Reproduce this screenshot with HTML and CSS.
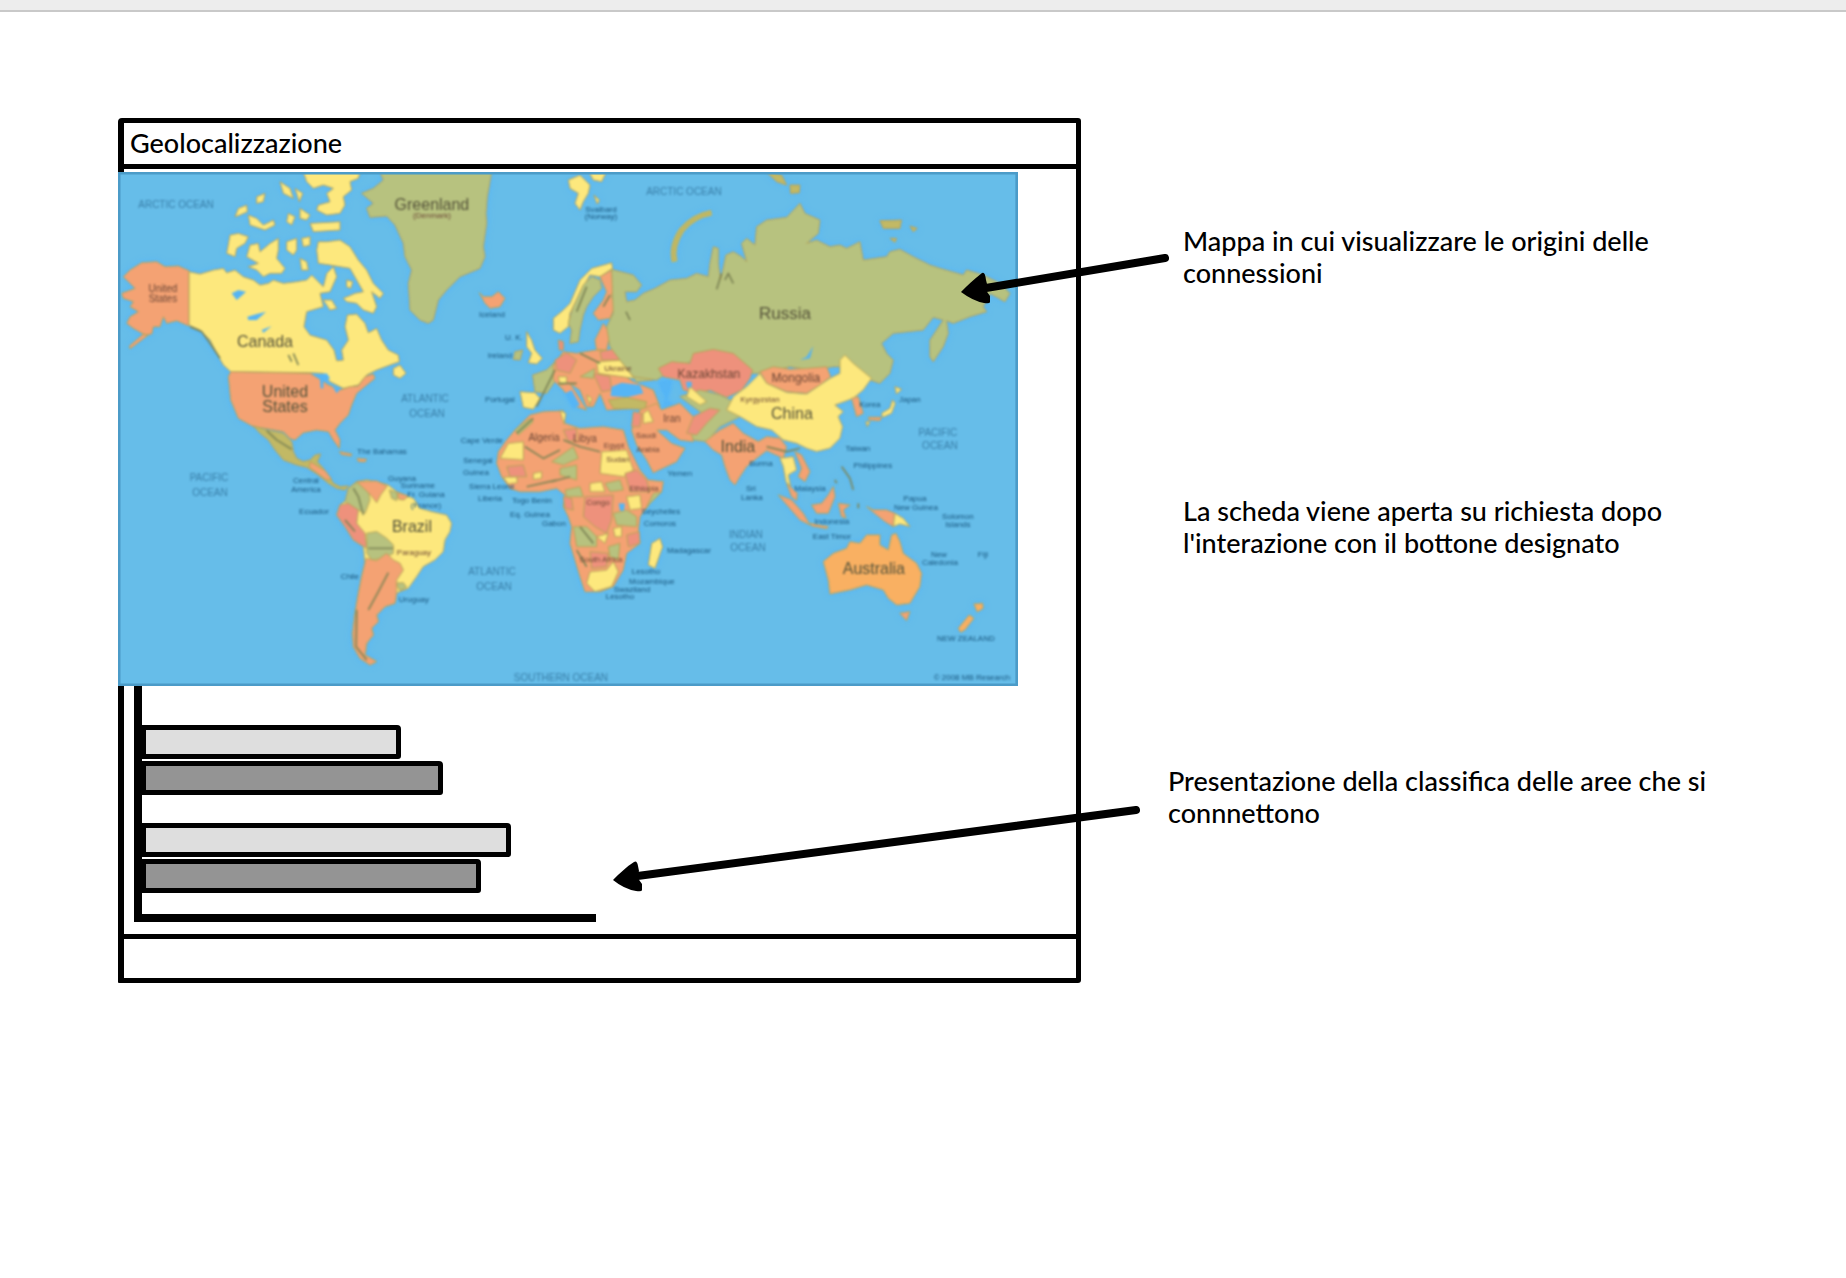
FILE: index.html
```html
<!DOCTYPE html>
<html lang="it">
<head>
<meta charset="utf-8">
<meta name="viewport" content="width=device-width, initial-scale=1">
<title>Geolocalizzazione</title>
<link rel="stylesheet" href="styles.css">
</head>
<body>
<div class="toolbar"></div>
<main class="board">
  <section class="window">
    <h1 class="window-title">Geolocalizzazione</h1>
    <svg class="map" viewBox="118 172 900 514" role="img" aria-label="Mappa del mondo">
      <rect class="sea" x="118" y="172" width="900" height="514"/>
      <g class="land">
        <!-- North America and Greenland -->
        <g transform="translate(110 110) scale(.33333)">
          <path class="orange" d="M40 500L60 480 95 458 140 455 165 470 205 468 237 482V648L200 632 170 640 160 620 150 650 130 650 125 672 105 675 70 655 50 640 60 620 85 605 60 590 70 575 40 565 35 550 75 535 60 520ZM115 675L60 716 58 708 100 672Z"/>
          <path class="yellow" d="M237 485L270 492 310 480 340 475 350 488 375 480 400 500 430 510 450 525 475 520 490 510 520 520 560 515 590 510 605 495 625 515 640 530 650 490 670 470 680 500 660 545 630 550 640 590 590 605 582 650 600 675 650 690 672 720 680 752 700 750 695 720 715 690 705 650 712 615 740 612 765 640 775 668 800 655 815 690 835 720 865 735 868 755 840 765 800 780 770 795 745 825 700 835 660 815 640 790 600 788 362 785 340 765 320 730 300 690 270 660 237 645Z"/>
          <path class="yellow" d="M650 395L690 390 720 410 745 450 770 480 790 520 820 550 810 565 785 545 800 590 790 610 760 600 740 580 710 575 700 565 735 550 760 545 740 510 720 475 690 470 660 465 625 460 620 420 625 395ZM580 186L750 186 745 205 720 215 725 240 700 260 705 285 690 310 650 315 620 300 625 285 660 275 650 250 670 235 640 225 610 235 590 215ZM510 215L540 235 550 265 520 250ZM555 235L578 250 568 275ZM440 260L465 250 460 275 440 280ZM375 320L385 295 410 285 412 305 390 315ZM415 315L440 325 460 345 490 330 495 345 465 360 420 345ZM535 310L555 320 545 345 530 335ZM600 340L690 335 690 360 610 365ZM570 295L600 315 590 330 570 325Z"/>
          <path class="yellow" d="M360 375L385 370 415 380 405 400 380 415 375 440 350 430ZM420 405L445 400 450 425 480 400 505 385 505 420 500 445 525 475 515 490 480 490 460 500 440 480 415 470 445 460 410 440ZM530 395L560 385 560 420 550 435 530 420ZM575 385L600 380 600 405 580 410ZM570 445L590 455 595 480 575 480ZM640 570L665 570 680 595 660 600ZM850 775L870 765 888 790 870 805 850 795ZM710 510L728 515 722 535 710 530Z"/>
          <path class="orange" d="M362 785L600 790 625 805 655 825 690 840 720 830 745 828 765 800 790 792 795 805 770 825 740 850 725 885 715 915 690 940 675 960 690 990 688 1015 670 990 655 965 620 960 580 968 555 990 540 985 520 965 465 955 430 950 385 925 362 870 355 800Z"/>
          <path class="green" d="M810 186L1145 186 1140 215 1132 260 1128 310 1130 340 1120 410 1125 440 1110 475 1050 500 1010 540 985 570 970 630 955 640 930 630 900 600 895 520 905 480 885 440 880 400 855 345 830 318 780 322 770 295 790 280 755 250 790 235 820 210Z"/>
          <path class="lake" d="M365 550L385 540 408 545 380 570ZM412 620L440 612 468 605 440 630 415 630ZM455 660L485 648 460 668ZM610 795L650 790 660 805 640 812 640 835 632 835 630 808ZM668 830L690 838 680 850Z"/>
          <path class="dark-line" d="M240 650L275 665 300 700 330 745M535 735L545 755M550 730L565 765"/>
        </g>
        <!-- Central and South America -->
        <g transform="translate(110 380) scale(.33333)">
          <path class="olive" d="M430 138L470 150 520 160 545 185 550 215 560 235 580 245 600 240 615 225 632 222 622 245 640 265 655 285 670 310 690 320 715 318 705 330 680 325 655 310 625 285 590 262 560 255 520 240 495 210 475 180 450 160Z"/>
          <path class="orange" d="M600 245L622 258 645 272 665 298 650 300 625 282 598 262ZM688 215L725 222 724 228 695 224ZM742 235L770 238 765 246 744 244Z"/>
          <path class="yellow" d="M715 325L740 305 770 300 800 305 835 315 860 335 910 355 930 385 965 395 1010 405 1025 430 1020 455 1005 480 1000 515 975 540 940 560 920 590 895 625 870 635 860 640 855 670 825 680 800 705 805 725 785 745 790 765 770 790 765 825 800 845 780 855 750 835 730 800 728 760 735 700 745 640 755 590 765 550 760 500 730 480 705 440 680 405 690 375 710 360Z"/>
          <path class="green" d="M715 325L740 308 775 330 780 360 765 400 735 385 705 365ZM770 460L800 455 830 475 850 495 850 520 820 535 785 540 770 520ZM838 330L862 338 860 362 845 355ZM858 610L880 608 890 622 870 633Z"/>
          <path class="orange" d="M740 305L800 303 832 318 812 345 800 368 782 345ZM862 338L895 348 882 360 866 358ZM768 535L800 542 830 520 850 540 870 550 880 570 860 600 860 640 855 670 825 680 800 705 805 725 785 745 790 765 770 790 765 825 800 845 780 855 750 835 730 800 728 760 735 700 745 640 755 590Z"/>
          <path class="pink" d="M690 375L715 370 745 390 740 430 765 460 770 505 730 480 705 440 680 405Z"/>
          <path class="dark-line" d="M470 152L500 180 545 208M730 325L745 350 760 405M705 420L735 455M835 578L805 635 775 690M740 690L738 800 770 840M775 505H850"/>
        </g>
        <!-- Northern and central Europe -->
        <g transform="translate(420 160) scale(.33333)">
          <path class="orange" d="M178 398L190 410 215 410 235 395 255 415 240 440 210 445 195 430Z"/>
          <path class="yellow" d="M445 60L480 45 510 75 505 100 490 125 480 150 465 130 475 100 450 85ZM508 38L558 38 545 65 520 60ZM522 105L538 120 532 132ZM400 475L430 450 450 430 465 395 480 360 515 325 575 308 578 325 540 350 510 345 490 380 465 430 450 460 445 500 420 520 400 510ZM320 515L335 540 345 570 367 595 350 612 325 608 335 580 320 560ZM300 695L345 698 360 715 340 748 310 742Z"/>
          <path class="green" d="M490 375L515 350 540 360 545 385 520 410 500 440 490 465 480 510 475 545 450 550 455 510 445 490 460 440ZM285 575L308 570 300 600 280 598ZM338 645L380 630 405 605 415 650 380 700 345 695Z"/>
          <path class="orange" d="M540 350L575 330 580 380 575 410 585 440 570 475 535 480 520 460 550 420 560 395ZM400 615L430 575 470 580 540 568 600 590 600 640 640 665 700 690 720 740 560 750 540 700 520 740 500 740 480 690 450 670 500 750 470 740 430 690 400 660ZM525 540L550 490 570 520 560 570 530 570Z"/>
          <path class="pink" d="M415 540L430 545 430 570 418 570ZM405 600L440 578 470 600 450 640 410 630ZM540 575L590 565 600 600 545 600ZM520 640L570 650 575 690 545 695Z"/>
          <path class="yellow" d="M530 605L610 600 655 635 640 655 535 640ZM415 650L440 650 440 670 420 675ZM500 705L515 715 510 735Z"/>
          <path class="green" d="M590 515L650 555 690 610 700 660 650 665 600 600 575 560ZM480 650L525 625 520 655Z"/>
          <path class="lake" d="M575 680L605 668 660 675 670 700 620 712 572 708ZM435 700L455 690 480 735 460 745Z"/>
          <path class="olive" d="M565 720L620 712 680 725 675 748 580 745Z"/>
          <path class="dark-line" d="M350 740L380 680 405 630M470 455L500 380M550 440L570 405M480 580L540 610M415 670L470 670"/>
        </g>
        <!-- Russia and central Asia -->
        <g transform="translate(600 160) scale(.33333)">
          <path class="green" d="M35 328L100 345 125 375 110 395 75 395 80 425 105 420 130 400 165 385 210 360 260 355 290 340 325 350 330 310 340 260 355 265 355 310 362 360 378 285 400 275 425 290 440 305 425 250 440 235 465 255 470 200 500 180 560 172 600 130 615 160 660 180 655 220 620 250 650 240 690 260 720 255 740 265 780 245 790 300 860 290 870 275 900 268 940 290 990 315 1020 325 1090 345 1100 330 1150 345 1200 370 1230 400 1215 425 1170 400 1150 440 1160 455 1110 470 1060 490 1040 482 1045 520 1030 560 1000 605 990 590 990 540 1010 510 1030 480 1000 472 970 510 880 520 845 550 860 580 880 600 870 640 840 670 810 660 740 620 700 620 640 630 570 620 480 640 450 640 400 600 340 590 280 600 200 640 170 660 100 650 60 600 30 560 20 500 40 460Z"/>
          <path class="novaya" d="M224 305Q212 260 245 210 280 168 335 158"/>
          <path class="olive" d="M500 36L545 45 560 75 530 65ZM570 75L600 75 598 98 572 100ZM840 182L905 180 900 205 850 205ZM930 198L952 205 940 215ZM870 235L890 235 885 247Z"/>
          <path class="pink" d="M175 625L215 605 270 610 280 580 340 568 400 580 458 630 450 655 425 690 380 712 330 690 290 700 250 690 240 660 190 650Z"/>
          <path class="orange" d="M480 635L520 620 570 628 620 625 680 620 692 650 660 675 620 700 560 695 500 670Z"/>
          <path class="lake" d="M175 665L215 660 210 690 200 720 222 735 215 750 190 745 195 710ZM258 665L275 665 275 685 262 685ZM600 600L620 590 640 558 630 595Z"/>
          <path class="dark-line" d="M350 388L365 340M375 360L385 340 400 370M78 455L90 480"/>
        </g>
        <!-- Africa and the Middle East -->
        <g transform="translate(480 380) scale(.33333)">
          <path class="orange" d="M105 150L150 105 190 95 250 92 255 130 300 145 370 140 430 150 445 200 465 240 480 270 505 300 550 305 545 335 510 370 480 410 475 450 480 490 440 520 430 570 400 620 360 635 315 635 300 590 285 540 270 490 275 440 265 410 250 380 255 345 230 325 180 335 120 335 90 325 65 290 50 250 55 215 80 180ZM455 150L480 90 530 70 545 90 600 70 640 110 640 185 600 180 560 150 530 150 575 190 615 205 590 245 520 278 500 240 470 195Z"/>
          <path class="yellow" d="M60 235L85 190 130 185 130 240ZM240 92L258 100 252 132ZM365 215L440 210 460 270 430 290 360 280ZM70 292L110 290 112 308 85 312ZM160 280L185 275 185 295 160 298ZM330 310L365 305 375 335 330 335ZM440 350L480 345 485 385 450 390ZM400 445L425 440 425 470 405 470ZM330 575L380 570 400 545 415 575 395 620 345 635 320 610ZM350 470L385 460 375 490ZM540 475L548 500 525 565 505 555 515 490ZM490 100L505 90 520 125 490 130Z"/>
          <path class="green" d="M105 150L150 115 160 125 115 165ZM215 245L280 200 295 235 250 255ZM240 265L290 255 290 300 240 285ZM375 310L420 300 430 330 390 335ZM400 400L440 390 470 410 470 440 410 435ZM280 440L320 440 350 470 350 500 290 500ZM520 340L545 335 510 370 495 390ZM385 500L420 490 415 540 390 530ZM255 330L300 320 310 350 260 350Z"/>
          <path class="pink" d="M435 280L470 270 500 300 510 335 450 335ZM315 350L400 345 395 420 380 460 345 440 310 410ZM440 465L478 455 480 490 445 500ZM250 150L290 145 290 180 265 185ZM330 515L385 520 380 560 335 565ZM80 260L130 255 140 290 90 290ZM250 350L275 355 280 390 255 385ZM460 95L485 100 480 140 455 140Z"/>
          <path class="lake" d="M416 370L435 370 432 392 420 392Z"/>
          <path class="dark-line" d="M135 200L190 235 240 210M250 180L300 200 360 215M215 305L270 290M110 160L160 115M300 440L340 490M290 510L320 560M140 320L230 300"/>
        </g>
        <!-- South-east Asia and Oceania -->
        <g transform="translate(700 380) scale(.33333)">
          <path class="green" d="M-60 50L0 30 60 45 120 75 120 110 60 140 20 185 -20 180 -30 150 20 110 -20 80Z"/>
          <path class="pink" d="M-40 160L-20 110 30 85 60 90 20 130 -10 165Z"/>
          <path class="yellow" d="M-30 20L20 65 0 75 -40 50ZM435 -75L460 -50 515 -5 490 30 460 55 420 70 405 75 430 95 415 110 428 140 420 175 390 205 350 215 320 205 290 190 250 180 215 150 170 140 120 110 80 90 100 50 140 20 180 -20 200 10 260 37 320 42 390 -5 420 -20 420 -60Z"/>
          <path class="orange" d="M15 185L60 150 100 130 130 160 175 185 200 170 240 175 260 200 250 235 200 212 170 235 140 260 120 290 105 315 90 300 75 260 65 225 40 210ZM285 215L305 225 330 275 315 305 295 290 305 265ZM455 55L475 50 490 100 470 110ZM505 112L545 112 540 122 508 120ZM260 310L292 340 290 362 275 350ZM235 345L275 360 310 400 330 435 300 420 265 380ZM330 430L385 440 380 446 335 438ZM335 375L365 370 385 345 400 320 405 350 385 400 350 400ZM415 370L450 375 430 390 438 415 425 410ZM500 380L520 390 560 390 585 400 580 440 555 425 530 405ZM600 700L630 695 620 722Z"/>
          <path class="yellow" d="M240 235L280 230 290 270 265 285 272 320 258 305 250 260ZM585 20L605 28 590 42ZM578 60L586 70 575 100 548 112 545 100 570 85ZM585 400L610 415 630 440 600 432 580 440ZM498 125L510 125 502 140Z"/>
          <path class="sand" d="M370 545L400 520 440 505 450 485 480 490 500 465 540 465 540 495 565 510 575 465 588 460 600 485 610 520 650 550 665 580 660 620 630 670 590 675 565 655 550 630 500 615 450 630 390 642 385 600ZM822 672L848 670 850 685 832 696ZM808 705L822 715 795 750 782 757 775 745Z"/>
          <path class="dark-line" d="M425 260L450 295 460 330M405 300L410 310M475 370V385M200 200L260 215 300 205"/>
        </g>
      </g>
      <g class="labels">
        <text class="country" x="432" y="210">Greenland</text>
        <text class="tiny" x="432" y="218">(Denmark)</text>
        <text class="country" x="265" y="347">Canada</text>
        <text class="country" x="285" y="397">United</text>
        <text class="country" x="285" y="412">States</text>
        <text class="small" x="163" y="292">United</text>
        <text class="small" x="163" y="302">States</text>
        <text class="country large" x="785" y="319">Russia</text>
        <text class="country" x="792" y="419">China</text>
        <text class="country" x="738" y="452">India</text>
        <text class="country" x="874" y="574">Australia</text>
        <text class="country" x="412" y="532">Brazil</text>
        <text class="medium" x="709" y="378">Kazakhstan</text>
        <text class="medium" x="796" y="382">Mongolia</text>
        <text class="small" x="672" y="422">Iran</text>
        <text class="small" x="544" y="441">Algeria</text>
        <text class="small" x="585" y="442">Libya</text>
        <text class="tiny" x="618" y="371">Ukraine</text>
        <text class="tiny" x="646" y="438">Saudi</text>
        <text class="tiny" x="648" y="452">Arabia</text>
        <text class="tiny" x="614" y="448">Egypt</text>
        <text class="tiny" x="618" y="462">Sudan</text>
        <text class="tiny" x="644" y="491">Ethiopia</text>
        <text class="tiny" x="598" y="505">Congo</text>
        <text class="tiny" x="601" y="562">South Africa</text>
        <text class="tiny" x="760" y="402">Kyrgyzstan</text>
        <text class="tiny" x="414" y="555">Paraguay</text>
        <g class="sea-name">
          <text x="176" y="208">ARCTIC OCEAN</text><text x="684" y="195">ARCTIC OCEAN</text>
          <text x="425" y="402">ATLANTIC</text><text x="427" y="417">OCEAN</text>
          <text x="209" y="481">PACIFIC</text><text x="210" y="496">OCEAN</text>
          <text x="492" y="575">ATLANTIC</text><text x="494" y="590">OCEAN</text>
          <text x="746" y="538">INDIAN</text><text x="748" y="551">OCEAN</text>
          <text x="938" y="436">PACIFIC</text><text x="940" y="449">OCEAN</text>
          <text x="561" y="681">SOUTHERN OCEAN</text>
        </g>
        <g class="place">
          <text x="601" y="212">Svalbard</text><text x="601" y="219">(Norway)</text>
          <text x="492" y="317">Iceland</text><text x="514" y="340">U. K.</text><text x="500" y="358">Ireland</text><text x="500" y="402">Portugal</text>
          <text x="382" y="454">The Bahamas</text><text x="306" y="483">Central</text><text x="306" y="492">America</text><text x="314" y="514">Ecuador</text>
          <text x="402" y="481">Guyana</text><text x="418" y="488">Suriname</text><text x="426" y="497">Fr. Guiana</text><text x="426" y="508">(France)</text>
          <text x="350" y="579">Chile</text><text x="414" y="602">Uruguay</text>
          <text x="482" y="443">Cape Verde</text><text x="478" y="463">Senegal</text><text x="476" y="475">Guinea</text><text x="492" y="489">Sierra Leone</text><text x="490" y="501">Liberia</text>
          <text x="532" y="503">Togo Benin</text><text x="530" y="517">Eq. Guinea</text><text x="554" y="526">Gabon</text>
          <text x="661" y="514">Seychelles</text><text x="660" y="526">Comoros</text><text x="689" y="553">Madagascar</text>
          <text x="646" y="574">Lesotho</text><text x="652" y="584">Mozambique</text><text x="632" y="592">Swaziland</text><text x="620" y="599">Lesotho</text>
          <text x="680" y="476">Yemen</text><text x="761" y="466">Burma</text><text x="751" y="491">Sri</text><text x="752" y="500">Lanka</text>
          <text x="910" y="402">Japan</text><text x="870" y="407">Korea</text><text x="858" y="451">Taiwan</text><text x="873" y="468">Philippines</text><text x="810" y="491">Malaysia</text>
          <text x="832" y="524">Indonesia</text><text x="832" y="539">East Timor</text><text x="915" y="501">Papua</text><text x="916" y="510">New Guinea</text>
          <text x="958" y="519">Solomon</text><text x="958" y="527">Islands</text><text x="939" y="557">New</text><text x="940" y="565">Caledonia</text><text x="983" y="557">Fiji</text>
          <text x="966" y="641">NEW ZEALAND</text><text x="972" y="680">© 2008 MB Research</text>
        </g>
      </g>
      <path class="map-edge" d="M118 172H1018V686H118Z"/>
    </svg>
    <div class="chart" role="img" aria-label="Classifica delle aree">
      <div class="bar light" style="width:57%"></div>
      <div class="bar dark" style="width:66.3%"></div>
      <div class="bar light second" style="width:81.3%"></div>
      <div class="bar dark" style="width:74.7%"></div>
    </div>
    <footer class="window-footer"></footer>
  </section>
  <aside class="notes">
    <p class="note">Mappa in cui visualizzare le origini delle connessioni</p>
    <p class="note">La scheda viene aperta su richiesta dopo l'interazione con il bottone designato</p>
    <p class="note wide">Presentazione della classifica delle aree che si connnettono</p>
  </aside>
  <svg class="arrows" viewBox="0 12 1846 1000" aria-hidden="true">
    <path class="shaft" d="M1165 258L980 289M1136 810L630 877"/>
    <path d="M961 292C967 286 974 279 982 273Q985 271 986 280L987 284 985 289 990 296V302Q990 304 984 303 973 301 961 292Z"/>
    <path d="M613 880C619 874 626 867 634 862Q637 860 638 866L639 871 637 877 642 884V890Q642 892 636 891 624 889 613 880Z"/>
  </svg>
</main>
</body>
</html>
```
FILE: styles.css
```css
* { box-sizing: border-box; }

body {
  margin: 0;
  background: #fff;
  color: #000;
  font-family: Lato, "Open Sans", sans-serif;
  font-size: 27px;
  line-height: 32px;
}

.toolbar {
  height: 12px;
  background: #ededed;
  border-bottom: 2px solid #c9c9c9;
}

.board {
  position: relative;
  display: grid;
  grid-template-columns: 963fr 562fr;
  column-gap: 87px;
  align-items: start;
  padding: 106px 116px 106px 118px;
}

.window {
  border: 5px solid #000;
  border-left-width: 6px;
  border-radius: 4px 3px 3px 1px;
}

.window-title {
  margin: 0;
  padding: 4px 6px 5px;
  border-bottom: 5px solid #000;
  font-size: 27px;
  font-weight: 500;
  line-height: 32px;
}

.map {
  display: block;
  width: calc(94% + 5px);
  margin: 3px 0 0 -6px;
}

.sea { fill: #66bde9; }
.land { filter: blur(1px) drop-shadow(0 0 3px #52b6ff); stroke: #b8a458; stroke-width: 3px; stroke-linejoin: round; }
.yellow { fill: #fde87d; }
.orange { fill: #f4a273; }
.pink { fill: #ee917c; }
.green { fill: #b7c27f; }
.olive { fill: #c2b965; }
.sand { fill: #f9b062; }
.lake { fill: #55b5f5; stroke: none; }
.novaya { fill: none; stroke: #bfb763; stroke-width: 18px; }
.dark-line { fill: none; stroke: #7d8455; stroke-width: 5px; }
.map-edge { fill: none; stroke: #4b9bc8; stroke-width: 5px; }

.labels {
  fill: #55533a;
  font-family: "Liberation Sans", Arial, sans-serif;
  text-anchor: middle;
  filter: blur(1px);
}
.country { font-size: 16px; }
.large { font-size: 17px; }
.medium { font-size: 12px; fill: #6b4636; }
.small { font-size: 10px; fill: #6b4636; }
.tiny { font-size: 8px; fill: #6b4636; }
.sea-name { font-size: 10px; fill: #397fa9; }
.place { font-size: 8px; fill: #17557e; }

.chart {
  width: 49%;
  max-width: calc(49% - 4px);
  margin: 0 0 12px 10px;
  padding: 39px 0 21px;
  border: solid #000;
  border-width: 0 0 8px 8px;
}

.bar {
  height: 34px;
  border: 5px solid #000;
  border-left-width: 4px;
  border-radius: 0 4px 3px 0;
}
.bar + .bar { margin-top: 2px; }
.bar + .second { margin-top: 28px; }
.light { background: #dedede; }
.dark { background: #949494; }

.window-footer {
  height: 44px;
  border-top: 5px solid #000;
}

.notes {
  display: grid;
  row-gap: 206px;
  padding-top: 107px;
}
.note { margin: 0; padding-left: 15px; font-weight: 500; }
.wide { padding-left: 0; }

.arrows {
  position: absolute;
  top: 0;
  left: 0;
  width: 100%;
  pointer-events: none;
}
.shaft { stroke: #000; stroke-width: 8px; stroke-linecap: round; }
```
